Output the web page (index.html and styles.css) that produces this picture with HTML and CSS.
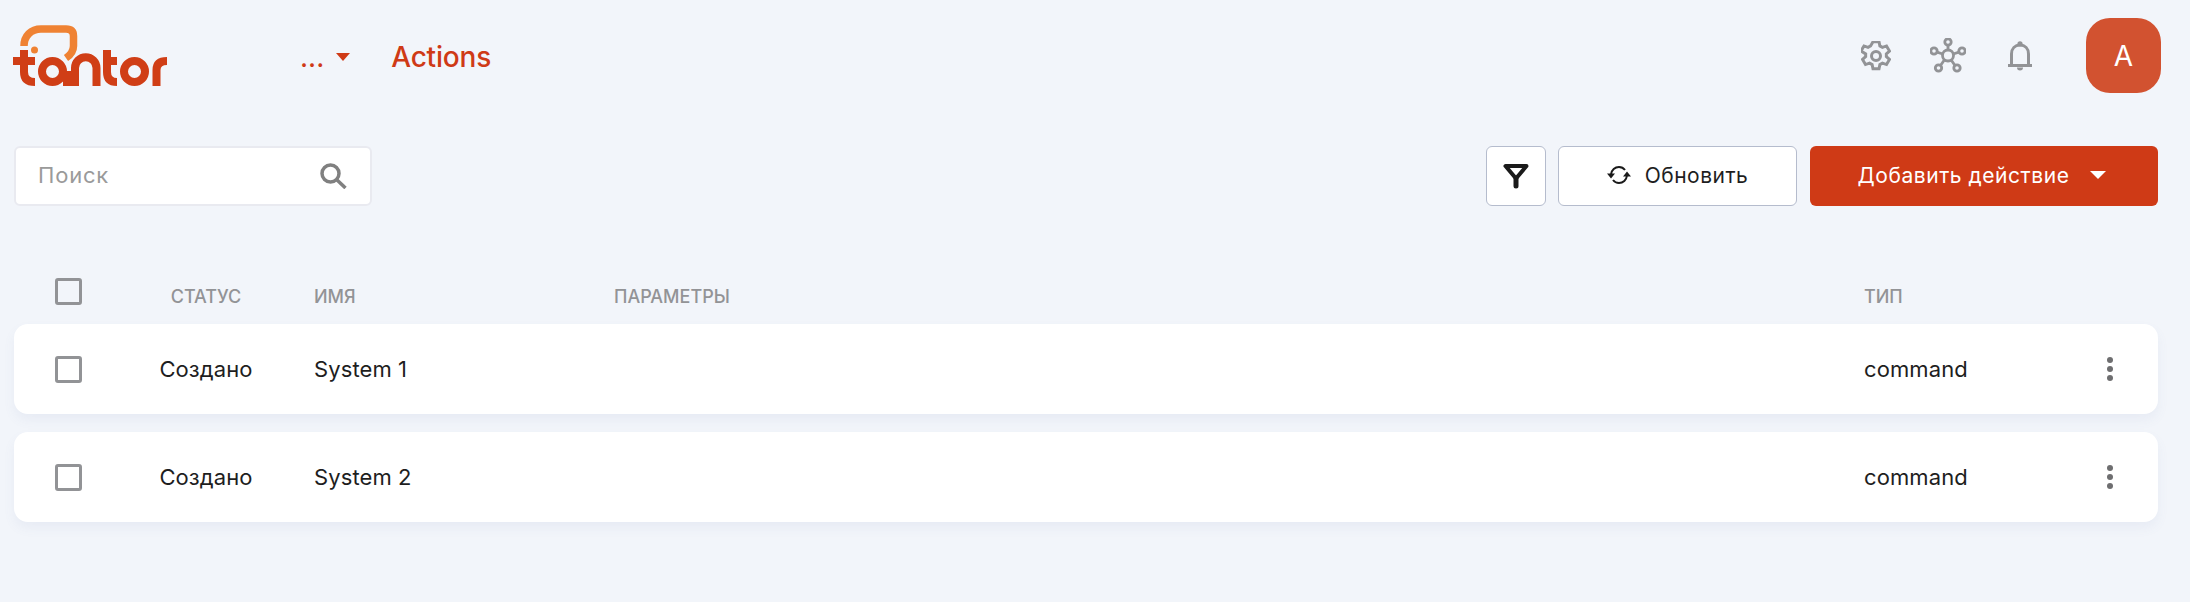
FILE: index.html
```html
<!DOCTYPE html>
<html lang="ru">
<head>
<meta charset="utf-8">
<title>Actions</title>
<link rel="stylesheet" href="styles.css">
</head>
<body>
<div class="page">
  <header class="header">
    <svg class="logo" width="154" height="61" viewBox="13 25 154 61" aria-label="tantor">
      <path class="logo-bubble" d="M24 46C24 36 31 29 41 29H66Q73.500 29 73.500 36V46Q73.500 53 66 58"/>
      <circle class="logo-fill" cx="34.500" cy="50" r="3.500"/>
      <g class="logo-mark">
        <path d="M24 50V72Q24 82 35 82"/>
        <path d="M13 61H35"/>
        <circle cx="52.500" cy="71.500" r="10.500"/>
        <path d="M67 71V86"/>
        <path d="M75 86V68A10.700 10.700 0 0 1 96.500 68V86"/>
        <path d="M107 50V72Q107 82 117 82"/>
        <path d="M103 61H117"/>
        <circle cx="134.500" cy="71.500" r="10.500"/>
        <path d="M156.500 86V70Q156.500 61 167 61"/>
      </g>
    </svg>
    <div class="menu-more">
      <span>...</span>
      <span class="caret caret-accent"></span>
    </div>
    <div class="menu-title">Actions</div>
    <div class="header-tools">
      <svg class="tool tool-gear" width="30" height="30" viewBox="2 2 20 20">
        <path d="M10 2.500h4l.6 2.800 1.700.9 2.700-.9 2 3.400-2.100 1.900v1.800l2.100 1.900-2 3.400-2.700-.9-1.700.9-.6 2.800h-4l-.6-2.800-1.700-.9-2.700.9-2-3.400 2.100-1.900v-1.800L2 8.700l2-3.400 2.700.9 1.700-.9z"/>
        <circle cx="12" cy="12" r="3"/>
      </svg>
      <svg class="tool tool-net" width="36" height="35" viewBox="0 0 36 35">
        <circle cx="18" cy="17.500" r="5.500"/>
        <circle cx="18" cy="4" r="3.200"/>
        <circle cx="4" cy="13" r="3.200"/>
        <circle cx="32" cy="13" r="3.200"/>
        <circle cx="8.500" cy="30" r="3.200"/>
        <circle cx="27" cy="30" r="3.200"/>
        <path d="M18 7.200V12M7 14.200l5.800 1.800M29 14.200L23.200 16M10.500 27.500l4-5.800M25 27.500l-4-5.800"/>
      </svg>
      <svg class="tool tool-bell" width="24" height="30" viewBox="0 0 24 30">
        <path d="M0 24.500H24M3.500 24V13C3.500 7.500 7 4 12 4s8.500 3.500 8.500 9v11"/>
        <circle class="tool-dot" cx="12" cy="2.800" r="2.600"/>
        <path class="tool-dot" d="M9 26.500h6a3 3 0 0 1-6 0z"/>
      </svg>
      <div class="avatar">A</div>
    </div>
  </header>

  <section class="toolbar">
    <label class="search">
      <input class="search-input" type="text" placeholder="Поиск">
      <svg class="search-icon" width="27" height="26" viewBox="0 0 27 26">
        <circle cx="10.500" cy="10.500" r="8.500"/>
        <path d="M16.500 16.500L25.500 25"/>
      </svg>
    </label>
    <div class="actions">
      <button class="btn btn-icon" type="button" aria-label="Фильтр">
        <svg width="26" height="26" viewBox="0 0 26 26">
          <path class="filter-icon" d="M2.500 3H23.500L13 15.500Z"/>
          <path class="filter-stem" d="M13 15V23"/>
        </svg>
      </button>
      <button class="btn btn-refresh" type="button">
        <svg class="refresh-icon" width="24" height="20" viewBox="0 0 24 20">
          <path d="M4 9.500C4.500 5 8 2 12 2c2.500 0 4.500 1 6 3"/>
          <path d="M20 10.500C19.500 15 16 18 12 18c-2.500 0-4.500-1-6-3"/>
          <path class="refresh-head" d="M0 8.500h8l-4 5zM24 11.500h-8l4-5z"/>
        </svg>
        <span>Обновить</span>
      </button>
      <button class="btn btn-add" type="button">
        <span>Добавить действие</span>
        <span class="caret caret-white"></span>
      </button>
    </div>
  </section>

  <div class="grid-row table-head">
    <span class="check"></span>
    <span class="col-status">Статус</span>
    <span>Имя</span>
    <span>Параметры</span>
    <span>Тип</span>
  </div>

  <div class="table-body">
    <div class="grid-row table-row">
      <span class="check"></span>
      <span class="col-status">Создано</span>
      <span>System 1</span>
      <span></span>
      <span>command</span>
      <span class="dots"><i></i><i></i><i></i></span>
    </div>
    <div class="grid-row table-row">
      <span class="check"></span>
      <span class="col-status">Создано</span>
      <span>System 2</span>
      <span></span>
      <span>command</span>
      <span class="dots"><i></i><i></i><i></i></span>
    </div>
  </div>
</div>
</body>
</html>
```
FILE: styles.css
```css
* { box-sizing: border-box; }
html, body { margin: 0; height: 100%; }
body {
  background: #f2f5fa;
  font-family: Inter, "Noto Sans", sans-serif;
  color: #1e1e1e;
  overflow: hidden;
}
.page { padding: 0 32px 0 14px; }

/* header */
.header { display: flex; align-items: center; height: 93px; padding-top: 18px; }
.logo { flex: none; margin-left: -1px; margin-top: -1px; }
.logo-bubble { fill: none; stroke: #ef8233; stroke-width: 7.500; }
.logo-fill { fill: #ef8233; }
.logo-mark { fill: none; stroke: #d03e16; stroke-width: 8; }
.menu-more {
  display: flex; align-items: center; gap: 12px;
  margin-left: 133px; margin-top: 3px; color: #cf3a16; font-size: 28px; line-height: 34px;
}
.menu-title { margin-left: 41px; margin-top: 3px; color: #cf3a16; font-size: 28px; font-weight: 500; letter-spacing: -.2px; line-height: 34px; }
.caret { display: block; width: 0; height: 0; border-style: solid; border-color: transparent; }
.caret-accent { border-width: 8px 7.500px 0; border-top-color: #cf3a16; }
.caret-white { border-width: 8px 8px 0; border-top-color: #fff; }
.header-tools { display: flex; align-items: center; margin-left: auto; margin-right: -3px; }
.tool { fill: none; stroke: #929396; stroke-width: 2; flex: none; }
.tool-gear { margin-right: 39px; }
.tool-net { stroke-width: 2.800; margin-right: 42px; }
.tool-bell { stroke-width: 3; margin-right: 54px; }
.tool-dot { fill: #929396; stroke: none; }
.avatar {
  width: 75px; height: 75px; border-radius: 24px;
  background: #d25230; color: #fff;
  display: flex; align-items: center; justify-content: center;
  font-size: 28px;
}

/* toolbar */
.toolbar { display: flex; align-items: center; justify-content: space-between; margin-top: 53px; height: 60px; }
.search {
  display: flex; align-items: center; width: 358px; height: 60px;
  background: #fff; border: 2px solid #e9eaf0; border-radius: 6px;
  padding: 0 23px 0 22px;
}
.search-input {
  flex: 1; min-width: 0; border: 0; outline: 0; background: transparent; padding: 0 0 2px;
  font: 22px Inter, sans-serif; letter-spacing: .8px; color: #1e1e1e;
}
.search-input::placeholder { color: #9a9a9a; opacity: 1; }
.search-icon { fill: none; stroke: #808080; stroke-width: 3.500; flex: none; }
.actions { display: flex; gap: 13px; }
.btn {
  height: 60px; border-radius: 6px; display: flex; align-items: center; justify-content: center;
  font: 21px Inter, sans-serif; letter-spacing: .5px; padding: 0 0 2px; cursor: pointer;
}
.btn-icon { width: 60px; margin-right: -1px; padding: 0; background: #fff; border: 1px solid #b5bccd; }
.filter-icon { fill: none; stroke: #1a1a1a; stroke-width: 4; stroke-linejoin: round; }
.filter-stem { fill: none; stroke: #1a1a1a; stroke-width: 5; stroke-linecap: round; }
.btn-refresh { width: 239px; gap: 14px; background: #fff; border: 1px solid #b5bccd; color: #1e1e1e; }
.refresh-icon { fill: none; stroke: #1a1a1a; stroke-width: 2; }
.refresh-head { fill: #1a1a1a; stroke: none; }
.btn-add { width: 348px; gap: 21px; padding-right: 4px; background: #cf3a16; border: 0; color: #fff; letter-spacing: .55px; }

/* table */
.grid-row {
  display: grid;
  grid-template-columns: 104px 176px 20px 300px 1250px 201px 93px;
  align-items: center;
}
.grid-row > .check { grid-column: 1; }
.grid-row > .col-status { grid-column: 2; text-align: center; }
.grid-row > :nth-child(3) { grid-column: 4; }
.grid-row > :nth-child(4) { grid-column: 5; }
.grid-row > :nth-child(5) { grid-column: 6; }
.grid-row > :nth-child(6) { grid-column: 7; }
.table-head {
  grid-template-rows: 27px;
  margin-top: 72px; height: 27px; margin-bottom: 19px;
  color: #929396; font-size: 18px; font-weight: 500; text-transform: uppercase;
}
.table-head > :not(.check) { padding-top: 10px; }
.check {
  display: block; width: 27px; height: 27px; margin-left: 41px;
  border: 3px solid #929396; border-radius: 3px;
}
.table-body { display: flex; flex-direction: column; gap: 18px; }
.table-row {
  height: 90px; background: #fff; border-radius: 14px;
  box-shadow: 0 6px 12px rgba(100, 120, 170, .07);
  font-size: 22px; letter-spacing: .1px;
}
.dots { display: flex; flex-direction: column; gap: 3px; width: 6px; margin-left: 42px; }
.dots i { display: block; width: 6px; height: 6px; border-radius: 50%; background: #6e6e70; }
```
